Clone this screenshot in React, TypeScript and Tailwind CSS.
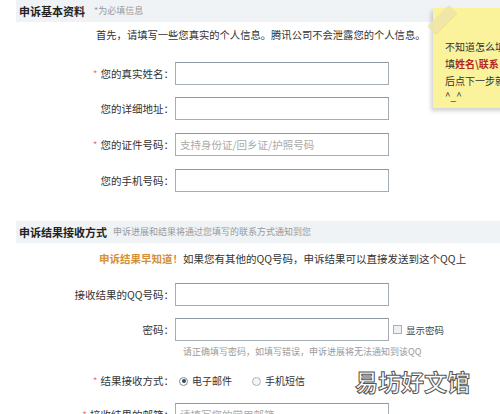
import React from "react";

const Star = () => <span className="text-[#e57b7b] mr-[3px] text-[10px]">*</span>;

function Row({
  label,
  star,
  placeholder,
  className = "",
  extra,
}: {
  label: string;
  star?: boolean;
  placeholder?: string;
  className?: string;
  extra?: React.ReactNode;
}) {
  return (
    <div className={"flex items-center h-[23px] " + className}>
      <div className="w-[159px] text-right pr-[1px] text-[10.5px] leading-[14px] text-[#333]">
        {star && <Star />}
        {label}
      </div>
      <div className="w-[214px] h-[23px] border border-[#a3adb5] border-t-[#8f99a1] bg-white flex items-center px-[4px] text-[10.5px] text-[#aaa] leading-[14px]">
        {placeholder}
      </div>
      {extra}
    </div>
  );
}

export default function App() {
  return (
    <div className="relative w-[500px] h-[414px] overflow-hidden bg-white font-['Noto_Sans_CJK_SC','Noto_Sans',sans-serif] text-[#333]">
      <div className="pl-[16px] flex flex-col">
        {/* header 1 */}
        <div className="h-[22px] bg-[#f0f3f6] flex items-center pl-[3px]">
          <span className="font-bold text-[11px] text-[#222] leading-[14px]">申诉基本资料</span>
          <span className="ml-[9px] text-[9px] text-[#999] leading-[12px]">*为必填信息</span>
        </div>
        <div className="mt-[6px] pl-[80px] text-[10.3px] leading-[14px] text-[#333] whitespace-nowrap">
          首先，请填写一些您真实的个人信息。腾讯公司不会泄露您的个人信息。
        </div>

        <Row className="mt-[20px]" star label="您的真实姓名：" />
        <Row className="mt-[12px]" label="您的详细地址：" />
        <Row className="mt-[13px]" star label="您的证件号码：" placeholder="支持身份证/回乡证/护照号码" />
        <Row className="mt-[13px]" label="您的手机号码：" />

        {/* header 2 */}
        <div className="mt-[29px] h-[22px] bg-[#f0f3f6] flex items-center pl-[3px]">
          <span className="font-bold text-[11px] text-[#222] leading-[14px]">申诉结果接收方式</span>
          <span className="ml-[6px] text-[9px] text-[#999] leading-[12px]">申诉进展和结果将通过您填写的联系方式通知到您</span>
        </div>
        <div className="mt-[9px] pl-[83px] text-[10.5px] leading-[14px] whitespace-nowrap">
          <span className="text-[#d4913a] font-bold">申诉结果早知道！</span>
          <span className="text-[#333]">如果您有其他的QQ号码，申诉结果可以直接发送到这个QQ上</span>
        </div>

        <Row className="mt-[17px]" label="接收结果的QQ号码：" />
        <Row
          className="mt-[12px]"
          label="密码："
          extra={
            <div className="flex items-center ml-[4px]">
              <span className="w-[9px] h-[9px] border border-[#a8b0b6] bg-[#eef0f2]" />
              <span className="ml-[4px] text-[9.5px] leading-[12px] text-[#444]">显示密码</span>
            </div>
          }
        />
        <div className="mt-[5px] pl-[167px] text-[9px] leading-[12px] text-[#9a9a9a] whitespace-nowrap">
          请正确填写密码，如填写错误，申诉进展将无法通知到该QQ
        </div>

        <div className="mt-[16px] flex items-center h-[14px]">
          <div className="w-[159px] text-right pr-[1px] text-[10.5px] leading-[14px] text-[#333]">
            <Star />
            结果接收方式：
          </div>
          <div className="flex items-center ml-[4px]">
            <span className="w-[9px] h-[9px] rounded-full border border-[#7d8f9e] bg-white flex items-center justify-center">
              <span className="w-[4px] h-[4px] rounded-full bg-[#3a4650]" />
            </span>
            <span className="ml-[4px] text-[10px] leading-[14px] text-[#333]">电子邮件</span>
          </div>
          <div className="flex items-center ml-[20px]">
            <span className="w-[9px] h-[9px] rounded-full border border-[#a9b3bb] bg-[#f4f5f6]" />
            <span className="ml-[4px] text-[10px] leading-[14px] text-[#333]">手机短信</span>
          </div>
        </div>

        <Row className="mt-[15px]" star label="接收结果的邮箱：" placeholder="请填写您的常用邮箱" />
      </div>

      {/* sticky note */}
      <div className="absolute left-[433px] top-[8px] w-[90px] h-[100px] bg-[#fbf29c] shadow-[-2px_3px_4px_rgba(0,0,0,0.18)]">
        <div className="absolute left-[-6px] top-[6px] w-[30px] h-[11px] bg-[#ede4a8]/90 rotate-[-45deg] shadow-[0_1px_1px_rgba(0,0,0,0.08)]" />
        <div className="pl-[12px] pt-[30px] text-[10px] leading-[17px] text-[#333] whitespace-nowrap">
          <div>不知道怎么填</div>
          <div>
            填<span className="text-[#b3261e] font-bold">姓名\联系</span>
          </div>
          <div>后点下一步就</div>
          <div className="leading-[14px]">^_^</div>
        </div>
      </div>

      {/* watermark */}
      <div className="absolute left-[355px] top-[366px] text-[23px] leading-[30px] font-bold text-white tracking-[0px] [-webkit-text-stroke:1px_#555] whitespace-nowrap">
        易坊好文馆
      </div>
    </div>
  );
}
